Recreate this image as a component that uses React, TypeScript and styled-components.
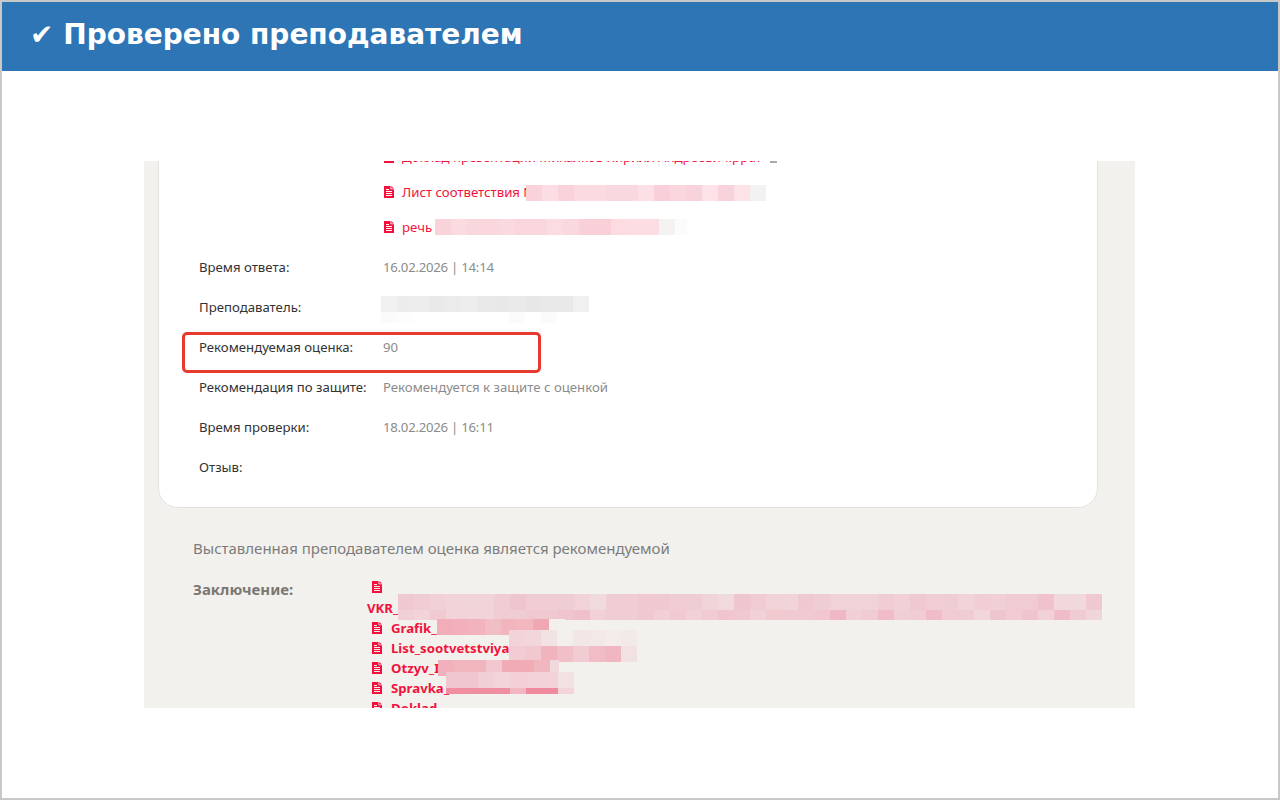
import React from 'react'
import styled, { createGlobalStyle } from 'styled-components'

const GlobalStyle = createGlobalStyle`
  html, body {
    margin: 0;
    padding: 0;
    background: #fff;
  }
`

const TEXT_FONT = `'Noto Sans', 'Open Sans', sans-serif`

type MosaicData = { width?: number; heights?: number[]; rows: string[][] }

// pixelated names, colours read off the screenshot
const listMosaic: MosaicData = {
  rows: [['#f9d2da', '#fcdde3', '#f9d2da', '#fbdae0', '#fbdae0', '#fad8df', '#fad8df', '#fde0e5', '#f9d0d9', '#fad6dd', '#f9d3db', '#fde2e7', '#f9d3db', '#fde2e6', '#f2f2f2']],
}
const speechMosaic: MosaicData = {
  width: 252,
  rows: [['#f9d2da', '#fbdae0', '#fad6dd', '#fad6dd', '#fbd9e0', '#fad5dc', '#fad7de', '#fbdce2', '#fbd8df', '#f9d0d8', '#f9d0d8', '#fcdbe1', '#fcdde3', '#fcdde3', '#f5f3f2', '#fafbfc']],
}
const teacherMosaic: MosaicData = {
  heights: [16, 11],
  rows: [
    ['#f1f1f1', '#ececec', '#ededed', '#e9e9ea', '#ebebeb', '#ededed', '#e9e9ea', '#e8e8e9', '#eaeaea', '#e7e7e8', '#e9e9ea', '#e9e9e9', '#f0f0f0'],
    ['#fbfbfb', '#fdfdfd', '#fff', '#fff', '#fff', '#fff', '#fff', '#fff', '#fbfbfb', '#fff', '#fbfbfb', '#fff', '#fff'],
  ],
}
const vkrMosaic: MosaicData = {
  heights: [16, 10],
  rows: [
    ['#f0c8d0', '#f0ccd3', '#f1d0d6', '#f1d3d9', '#f1d4da', '#f1d4da', '#f0ccd3', '#efc5ce', '#f0cdd4', '#f0cdd4', '#f0cdd4', '#f1d2d7', '#f1dadd', '#f0cdd4', '#f0cdd4', '#f0c8d0', '#f0c8d0', '#f0cdd4', '#f0cdd4', '#f1d4d8', '#f1dadc', '#efc5ce', '#f0ccd2', '#f1d3d7', '#f1d4d7', '#f0c8d0', '#f0ccd3', '#f1d2d6', '#f1d3d7', '#f1d3d7', '#f0ccd3', '#f1d0d6', '#f0c8d0', '#f0ced3', '#f0cdd3', '#f1d4d8', '#f0ced4', '#f0cfd5', '#f0cbd1', '#f0cbd1', '#efc2cc', '#f1d8da', '#f1d8da', '#f0c8d0'],
    ['#f1cfd6', '#f1d3d9', '#f0c9d1', '#f1d3d9', '#f1d3d9', '#f1d4da', '#f0ccd3', '#f0cdd4', '#f0c8d0', '#f0c8d0', '#f0c4cd', '#efc0cb', '#f1d0d6', '#f0cdd4', '#f0cdd4', '#f0c8d0', '#f1cfd5', '#f0c9d1', '#f1d1d7', '#f0cbd2', '#f0c5ce', '#f0c8d0', '#f1d0d6', '#f3c9d0', '#f1c9d0', '#f1c9d0', '#f0c7cf', '#efb8c4', '#f1cfd5', '#f0cbd1', '#efbcc8', '#f1ced4', '#f0cdd3', '#efbcc7', '#f1cbd2', '#f0cbd2', '#f1d7da', '#f0c6ce', '#f1cbd2', '#efc4cc', '#f1d1d5', '#efbcc8', '#f0cbd1', '#f1d6d9'],
  ],
}
const grafikMosaic: MosaicData = {
  rows: [['#f1adb8', '#f1b0bb', '#f1b3bd', '#f1bec6', '#f2b5bd', '#f2b7bf', '#f0a8b5', '#f3efed']],
}
const listSmallMosaic: MosaicData = {
  rows: [
    ['#f1d3d8', '#f1d7db', '#f1e3e3', '#f3efed', '#f2e6e6', '#f2e8e8', '#f3ecea', '#f2e9e9'],
    ['#f1ccd2', '#f1c8cf', '#f1b4be', '#f1bfc8', '#f1ccd2', '#f1bcc5', '#f0b6c1', '#f2e1e3'],
  ],
}
const otzyvMosaic: MosaicData = {
  width: 121,
  rows: [['#f1b0bb', '#f1b5be', '#f1b5be', '#f2c7cf', '#f1abb6', '#f1abb5', '#f1b7c1', '#f1dadd']],
}
const spravkaMosaic: MosaicData = {
  heights: [16, 6],
  rows: [
    ['#f1c7cf', '#f1c7cf', '#f2cfd5', '#f2d5da', '#f2d0d6', '#f2d2d7', '#f2d2d7', '#f2e1e2'],
    ['#f08fa2', '#f08fa2', '#f08ea1', '#f08fa2', '#f1b8c3', '#f08a9e', '#f08a9e', '#f2d5db'],
  ],
}

function FileIcon() {
  return (
    <Icon viewBox="0 0 10 12" aria-hidden="true">
      <path
        fill="currentColor"
        fillRule="evenodd"
        d="M0 0h6.5v3.2H10V12H0zM7.3 0 10 2.5H7.3zM2 3v1h3V3zM2 5v1h6V5zM2 7v1h6V7zM2 9v1h6V9z"
      />
    </Icon>
  )
}

function Mosaic({ width, heights, rows }: MosaicData) {
  return (
    <MosaicBox style={width ? { width } : undefined}>
      {rows.map((row, i) => (
        <MosaicRow key={i}>
          {row.map((color, j) => (
            <span key={j} style={{ height: heights ? heights[i] : 16, background: color }} />
          ))}
        </MosaicRow>
      ))}
    </MosaicBox>
  )
}

export default function App() {
  return (
    <>
      <GlobalStyle />
      <Frame>
        <Header>
          <Title>✔ Проверено преподавателем</Title>
        </Header>
        <Body>
          <Panel>
            <Scrolled>
              <Card>
                <FileRows>
                  <FileRow>
                    <FileIcon />
                    Доклад презентации Михалков Кирилл Андреевич.pptx
                    <Smudge />
                  </FileRow>
                  <FileRow>
                    <FileIcon />
                    Лист соответствия N
                    <MosaicSlot $left={142} $top={11}><Mosaic {...listMosaic} /></MosaicSlot>
                  </FileRow>
                  <FileRow>
                    <FileIcon />
                    речь
                    <MosaicSlot $left={51} $top={10}><Mosaic {...speechMosaic} /></MosaicSlot>
                  </FileRow>
                </FileRows>
                <Row>
                  <Label>Время ответа:</Label>
                  <Value $date>16.02.2026 | 14:14</Value>
                </Row>
                <Row>
                  <Label>Преподаватель:</Label>
                  <Value>
                    <MosaicSlot $left={-2} $top={-1}><Mosaic {...teacherMosaic} /></MosaicSlot>
                  </Value>
                </Row>
                <Row>
                  <Label>Рекомендуемая оценка:</Label>
                  <Value>90</Value>
                  <Highlight />
                </Row>
                <Row>
                  <Label>Рекомендация по защите:</Label>
                  <Value>Рекомендуется к защите с оценкой</Value>
                </Row>
                <Row>
                  <Label>Время проверки:</Label>
                  <Value $date>18.02.2026 | 16:11</Value>
                </Row>
                <Row>
                  <Label>Отзыв:</Label>
                  <Value />
                </Row>
              </Card>
              <Note>Выставленная преподавателем оценка является рекомендуемой</Note>
              <Conclusion>
                <ConclusionLabel>Заключение:</ConclusionLabel>
                <Attachments>
                  <StackedAttachment>
                    <FileIcon />
                    <span>VKR_</span>
                    <MosaicSlot $left={31} $top={16}><Mosaic {...vkrMosaic} /></MosaicSlot>
                  </StackedAttachment>
                  <Attachment>
                    <FileIcon />
                    Grafik_
                    <MosaicSlot $left={70} $top={1}><Mosaic {...grafikMosaic} /></MosaicSlot>
                  </Attachment>
                  <Attachment>
                    <FileIcon />
                    List_sootvetstviya_
                    <MosaicSlot $left={142} $top={-8}><Mosaic {...listSmallMosaic} /></MosaicSlot>
                  </Attachment>
                  <Attachment>
                    <FileIcon />
                    Otzyv_I
                    <MosaicSlot $left={71} $top={2}><Mosaic {...otzyvMosaic} /></MosaicSlot>
                  </Attachment>
                  <Attachment>
                    <FileIcon />
                    Spravka_
                    <MosaicSlot $left={79} $top={-6}><Mosaic {...spravkaMosaic} /></MosaicSlot>
                  </Attachment>
                  <Attachment>
                    <FileIcon />
                    Doklad
                  </Attachment>
                </Attachments>
              </Conclusion>
            </Scrolled>
          </Panel>
        </Body>
      </Frame>
    </>
  )
}

const Frame = styled.div`
  box-sizing: border-box;
  width: 1280px;
  height: 800px;
  border: 2px solid #c8c8c8;
  background: #fff;
  overflow: hidden;
  display: flex;
  flex-direction: column;
`

const Header = styled.header`
  box-sizing: border-box;
  height: 69px;
  flex: none;
  background: #2e75b6;
  padding: 0 0 4px 28px;
  display: flex;
  align-items: center;
`

const Title = styled.h1`
  margin: 0;
  color: #fff;
  font-family: 'DejaVu Sans', sans-serif;
  font-size: 28px;
  font-weight: 700;
`

const Body = styled.main`
  flex: 1;
  padding: 90px 0 90px 142px;
`

const Panel = styled.div`
  width: 991px;
  height: 547px;
  background: #f3f1ed;
  overflow: hidden;
`

const Scrolled = styled.div`
  margin-top: -23px;
  padding: 0 14px;
`

const Card = styled.section`
  box-sizing: border-box;
  width: 940px;
  height: 370px;
  background: #fff;
  border: 1px solid #e4e3de;
  border-radius: 0 0 20px 20px;
  padding: 0 40px;
  font-family: ${TEXT_FONT};
  font-size: 13.2px;
  line-height: 20px;
`

const FileRows = styled.div`
  padding-left: 185px;
  margin-bottom: 13px;
`

const FileRow = styled.div`
  position: relative;
  height: 35px;
  display: flex;
  align-items: center;
  gap: 8px;
  color: #f2133c;
`

const Smudge = styled.span`
  position: absolute;
  left: 386px;
  top: 22px;
  width: 7px;
  height: 2px;
  background: #a9a9ad;
`

const Icon = styled.svg`
  width: 10px;
  height: 12px;
  flex: none;
  color: #f50f3c;
`

const MosaicSlot = styled.span`
  position: absolute;
  left: ${(p: { $left: number; $top: number }) => p.$left}px;
  top: ${(p: { $left: number; $top: number }) => p.$top}px;
`

const MosaicBox = styled.span`
  display: block;
  overflow: hidden;
`

const MosaicRow = styled.span`
  display: flex;
  & > span {
    flex: none;
    width: 16px;
  }
`

const Row = styled.div`
  position: relative;
  display: flex;
  height: 40px;
`

const Label = styled.div`
  width: 184px;
  flex: none;
  color: #333;
`

const Value = styled.div<{ $date?: boolean }>`
  position: relative;
  color: #8c8c8c;
  letter-spacing: ${p => (p.$date ? '-0.25px' : 'normal')};
`

const Highlight = styled.div`
  position: absolute;
  left: -17px;
  top: -5px;
  width: 359px;
  height: 41px;
  box-sizing: border-box;
  border: 3px solid #e8392f;
  border-radius: 5px;
`

const Note = styled.p`
  margin: 30px 0 0 35px;
  color: #7c7c7c;
  font-family: ${TEXT_FONT};
  font-size: 15px;
  line-height: 20px;
`

const Conclusion = styled.div`
  display: flex;
  margin: 20px 0 0 35px;
  font-family: ${TEXT_FONT};
  font-size: 13.2px;
  font-weight: 700;
`

const ConclusionLabel = styled.div`
  width: 174px;
  flex: none;
  padding-top: 1px;
  color: #7b7773;
  font-size: 15px;
  line-height: 20px;
`

const Attachments = styled.div`
  width: 200px;
  color: #f2133c;
`

const Attachment = styled.div`
  position: relative;
  height: 20px;
  padding-left: 5px;
  display: flex;
  align-items: center;
  gap: 9px;
`

const StackedAttachment = styled.div`
  box-sizing: border-box;
  position: relative;
  height: 40px;
  padding-top: 3px;
  display: flex;
  flex-direction: column;
  align-items: flex-start;
  gap: 6px;
  svg {
    margin-left: 5px;
  }
`
